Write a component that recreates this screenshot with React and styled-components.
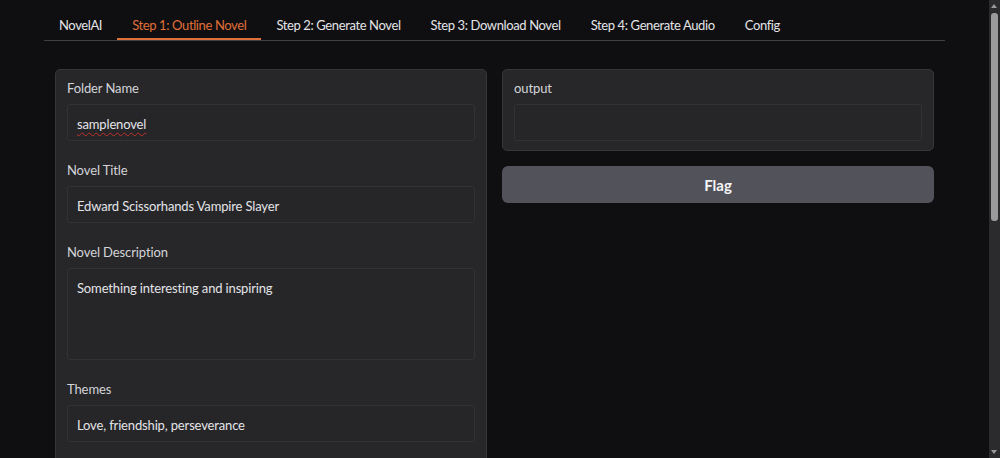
import React from "react";
import styled, { createGlobalStyle } from "styled-components";

const GlobalStyle = createGlobalStyle`
  html, body {
    margin: 0;
    padding: 0;
    background: #0f0f11;
  }
  body {
    font-family: Lato, "Noto Sans", sans-serif;
    color: #e4e4e7;
  }
`;

const Page = styled.div`
  margin-right: 11px;
  padding: 0 44px;
  min-height: 955px;
  box-sizing: border-box;
`;

const TabBar = styled.nav`
  display: flex;
  padding-top: 11px;
  border-bottom: 1px solid #3f3f46;
`;

const Tab = styled.div`
  height: 29px;
  line-height: 28px;
  padding: 0 15px;
  font-size: 13px;
  letter-spacing: -0.38px;
  box-sizing: border-box;
  border-bottom: 2px solid ${(p) => (p.$active ? "#e0703a" : "transparent")};
  color: ${(p) => (p.$active ? "#e0703a" : "#e4e4e7")};
  white-space: nowrap;
`;

const Content = styled.div`
  display: grid;
  grid-template-columns: 1fr 1fr;
  gap: 15px;
  padding: 28px 11px 0;
  align-items: start;
`;

const Column = styled.div`
  display: flex;
  flex-direction: column;
  gap: 15px;
`;

const Panel = styled.div`
  background: #27272a;
  border: 1px solid #36363a;
  border-radius: 5px;
  padding: 8px 11px ${(p) => p.$pb || 11}px;
  min-height: ${(p) => p.$minH || 0}px;
  box-sizing: border-box;
  display: flex;
  flex-direction: column;
  gap: 19px;
`;

const FieldGroup = styled.div`
  display: flex;
  flex-direction: column;
`;

const Label = styled.div`
  font-size: 13px;
  letter-spacing: -0.1px;
  line-height: 20px;
  color: #d4d4d8;
  margin-bottom: 6px;
`;

const Field = styled.div`
  box-sizing: border-box;
  height: ${(p) => p.$h || 37}px;
  border: 1px solid #323236;
  border-radius: 3px;
  background: #262629;
  padding: ${(p) => (p.$multi ? "9px 9px" : "2px 9px 0")};
  display: flex;
  align-items: ${(p) => (p.$multi ? "flex-start" : "center")};
  font-size: 13px;
  letter-spacing: -0.15px;
  line-height: 20px;
  color: #e4e4e7;
`;

const Misspelled = styled.span`
  text-decoration: underline wavy #c0302b;
  text-decoration-thickness: 1px;
  text-underline-offset: 3px;
`;

const FlagButton = styled.button`
  height: 37px;
  border: none;
  border-radius: 6px;
  background: #52525b;
  color: #f4f4f5;
  font-family: inherit;
  font-size: 15px;
  font-weight: 700;
  cursor: pointer;
`;

/* page scrollbar drawn over the right edge of the window */
const ScrollTrack = styled.div`
  position: fixed;
  top: 0;
  right: 0;
  width: 11px;
  height: 100vh;
  background: #2b2b2d;
`;

const ScrollThumb = styled.div`
  position: absolute;
  left: 2px;
  top: 13px;
  width: 7px;
  height: 208px;
  border-radius: 3px;
  background: #9a9a9c;
`;

const ScrollArrow = styled.div`
  position: absolute;
  left: 2px;
  width: 0;
  height: 0;
  border-left: 3.5px solid transparent;
  border-right: 3.5px solid transparent;
  ${(p) =>
    p.$down
      ? "bottom: 4px; border-top: 4px solid #9a9a9c;"
      : "top: 4px; border-bottom: 4px solid #9a9a9c;"}
`;

const tabs = [
  "NovelAI",
  "Step 1: Outline Novel",
  "Step 2: Generate Novel",
  "Step 3: Download Novel",
  "Step 4: Generate Audio",
  "Config",
];

export default function App() {
  return (
    <>
      <GlobalStyle />
      <Page>
        <TabBar>
          {tabs.map((t, i) => (
            <Tab key={t} $active={i === 1}>
              {t}
            </Tab>
          ))}
        </TabBar>
        <Content>
          <Column>
            <Panel $minH={860}>
              <FieldGroup>
                <Label>Folder Name</Label>
                <Field>
                  <Misspelled>samplenovel</Misspelled>
                </Field>
              </FieldGroup>
              <FieldGroup>
                <Label>Novel Title</Label>
                <Field>Edward Scissorhands Vampire Slayer</Field>
              </FieldGroup>
              <FieldGroup>
                <Label>Novel Description</Label>
                <Field $multi $h={92}>
                  Something interesting and inspiring
                </Field>
              </FieldGroup>
              <FieldGroup>
                <Label>Themes</Label>
                <Field>Love, friendship, perseverance</Field>
              </FieldGroup>
            </Panel>
          </Column>
          <Column>
            <Panel $pb={9}>
              <FieldGroup>
                <Label>output</Label>
                <Field />
              </FieldGroup>
            </Panel>
            <FlagButton>Flag</FlagButton>
          </Column>
        </Content>
      </Page>
      <ScrollTrack aria-hidden="true">
        <ScrollArrow />
        <ScrollThumb />
        <ScrollArrow $down />
      </ScrollTrack>
    </>
  );
}
